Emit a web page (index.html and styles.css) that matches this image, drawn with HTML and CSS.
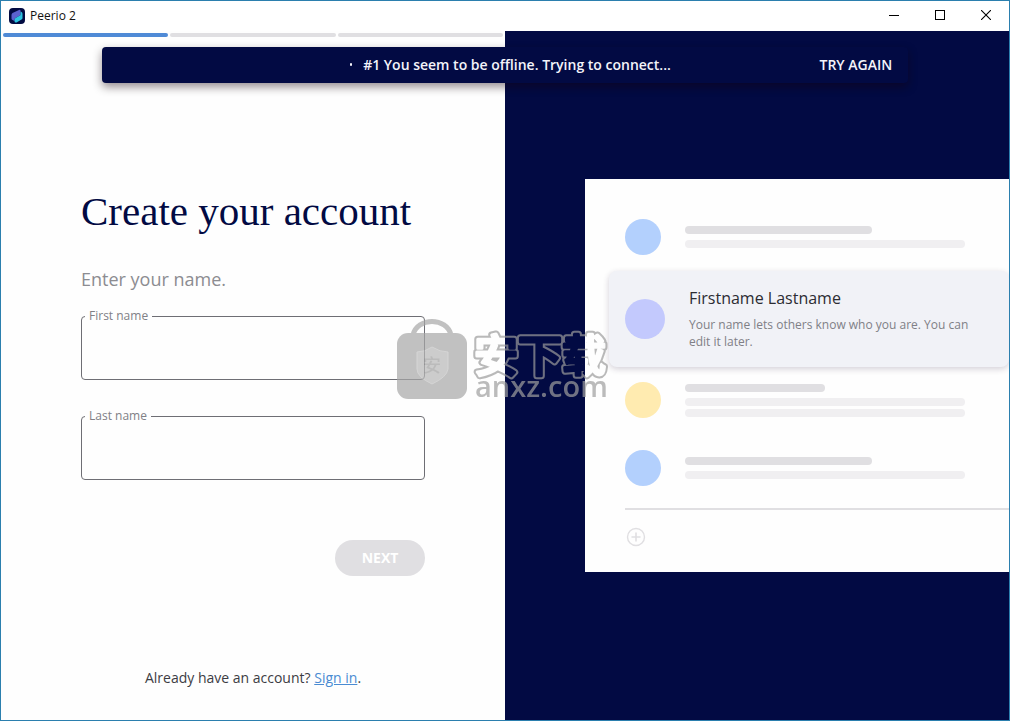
FILE: index.html
```html
<!DOCTYPE html>
<html lang="en">
<head>
<meta charset="utf-8">
<meta name="viewport" content="width=device-width, initial-scale=1">
<title>Peerio 2</title>
<link rel="stylesheet" href="styles.css">
</head>
<body>
<div class="window">
  <header class="titlebar">
    <svg class="app-icon" width="16" height="16" viewBox="0 0 16 16" aria-hidden="true">
      <rect width="16" height="16" rx="4" fill="#020b42"/>
      <path d="M2.500 7Q2.500 6 3.500 5L10 2Q11.500 1.300 11.500 3V6.500Q11.500 7.500 10 8L6.500 10Q5.500 10.500 5.500 11.500V13L3.500 12Q2.500 11.500 2.500 10.500Z" fill="#5b62cf"/>
      <path d="M11.500 3.500L12.500 4Q13.500 4.500 13.500 6V10Q13.500 11 12.500 11.500L7.500 14.500Q5.500 15 5.500 13V11.500Q5.500 10.500 6.500 10L10 8Q11.500 7.500 11.500 6.500Z" fill="#2cc3e0"/>
    </svg>
    <span class="app-name">Peerio 2</span>
    <div class="window-controls">
      <button class="window-button" type="button" aria-label="Minimize">
        <svg width="10" height="10" viewBox="0 0 10 10"><path d="M0 5.500H10" stroke="#000"/></svg>
      </button>
      <button class="window-button" type="button" aria-label="Maximize">
        <svg width="10" height="10" viewBox="0 0 10 10"><rect x=".5" y=".5" width="9" height="9" fill="none" stroke="#000"/></svg>
      </button>
      <button class="window-button" type="button" aria-label="Close">
        <svg width="10" height="10" viewBox="0 0 10 10"><path d="M0 0L10 10M10 0L0 10" stroke="#000" stroke-width="1.100"/></svg>
      </button>
    </div>
  </header>

  <main class="content">
    <section class="signup">
      <div class="progress">
        <span class="step step-active"></span>
        <span class="step"></span>
        <span class="step"></span>
      </div>
      <form class="form">
        <h1 class="title">Create your account</h1>
        <p class="subtitle">Enter your name.</p>
        <fieldset class="field">
          <legend class="field-legend"><label for="first-name">First name</label></legend>
          <input class="field-input" id="first-name" type="text">
        </fieldset>
        <fieldset class="field">
          <legend class="field-legend"><label for="last-name">Last name</label></legend>
          <input class="field-input" id="last-name" type="text">
        </fieldset>
        <button class="next" type="submit" disabled>NEXT</button>
      </form>
      <p class="signin">Already have an account? <a class="signin-link" href="#">Sign in</a>.</p>
    </section>

    <section class="preview">
      <div class="card">
        <div class="row">
          <span class="avatar avatar-blue"></span>
          <div class="lines"><span class="line line-head"></span><span class="line"></span></div>
        </div>
        <div class="highlight">
          <span class="avatar avatar-violet"></span>
          <div class="highlight-text">
            <h2 class="highlight-name">Firstname Lastname</h2>
            <p class="highlight-note">Your name lets others know who you are. You can edit it later.</p>
          </div>
        </div>
        <div class="row row-gap">
          <span class="avatar avatar-yellow"></span>
          <div class="lines"><span class="line line-head line-short"></span><span class="line"></span><span class="line line-tight"></span></div>
        </div>
        <div class="row">
          <span class="avatar avatar-blue"></span>
          <div class="lines"><span class="line line-head"></span><span class="line"></span></div>
        </div>
        <div class="card-footer">
          <svg width="22" height="22" viewBox="0 0 22 22" fill="none" stroke="#e0dfe2" aria-hidden="true">
            <circle cx="11" cy="11" r="8.500" stroke-width="1.400"/>
            <path d="M6.500 11H15.500M11 6.500V15.500" stroke-width="1.600"/>
          </svg>
        </div>
      </div>
    </section>
  </main>

  <div class="banner" role="status">
    <div class="banner-message">
      <span class="spinner"><i class="spinner-dot"></i></span>
      <span>#1 You seem to be offline. Trying to connect...</span>
    </div>
    <button class="retry" type="button">TRY AGAIN</button>
  </div>

  <svg class="watermark" width="230" height="96" viewBox="0 0 230 96" aria-hidden="true">
    <defs>
      <mask id="outline" maskUnits="userSpaceOnUse" x="0" y="0" width="230" height="96">
        <text class="mark-cjk mark-outer" x="80" y="57">安下载</text>
        <text class="mark-cjk mark-inner" x="80" y="57">安下载</text>
      </mask>
    </defs>
    <path d="M19 20C23 2 53 2 57 20" fill="none" stroke="#a8a8a8" stroke-width="5"/>
    <rect x="3" y="18" width="70" height="66" rx="11" fill="#a8a8a8"/>
    <path d="M38 32Q46 37 54 37V54Q53 62 38 69Q23 62 23 54V37Q31 37 38 32Z" fill="#b8b8b8" stroke="#c4c4c4"/>
    <text class="mark-small" x="38" y="57" text-anchor="middle">安</text>
    <rect x="70" y="0" width="160" height="96" fill="#9c9c9c" mask="url(#outline)"/>
    <text class="mark-latin" x="81" y="82">anxz.com</text>
  </svg>
</div>
</body>
</html>
```
FILE: styles.css
```css
* { box-sizing: border-box; }

body {
  margin: 0;
  font-family: "Open Sans", "Noto Sans", sans-serif;
  color: #3c3c43;
}

h1, h2, p { margin: 0; }
button { font-family: inherit; border: 0; padding: 0; background: none; }

.window {
  position: relative;
  display: flex;
  flex-direction: column;
  min-height: 100vh;
  overflow: hidden;
  border: 1px solid #2b7fae;
  background: #fefefe;
}

.titlebar {
  display: flex;
  align-items: center;
  height: 30px;
  padding-left: 8px;
  background: #fff;
}
.app-icon { margin-right: 5px; }
.app-name { padding-bottom: 2px; font: 12px "Open Sans", sans-serif; color: #111; }
.window-controls { display: flex; align-self: stretch; margin-left: auto; }
.window-button {
  display: grid;
  place-items: center;
  width: 46px;
  padding-bottom: 2px;
}

.content { flex: 1; display: grid; grid-template-columns: 1fr 1fr; }

.signup { display: flex; flex-direction: column; min-width: 0; }
.progress { display: flex; gap: 2px; padding: 2px; }
.step { flex: 1; height: 4px; border-radius: 2px; background: #e0dfe2; }
.step-active { background: #4f8ad6; }

.form { display: flex; flex-direction: column; padding: 148px 80px 0; }
.title {
  font: 41px/48px "Source Serif Pro", "Liberation Serif", serif;
  white-space: nowrap;
  color: #020a43;
}
.subtitle {
  margin: 32px 0 17px;
  font-size: 18px;
  line-height: 24px;
  color: #8c8c91;
}
.field {
  min-width: 0;
  height: 72px;
  margin: 0 0 28px;
  padding: 0 3px;
  border: 1px solid #6e6e74;
  border-radius: 4px;
}
.field-legend {
  padding: 0 4px;
  font-size: 12px;
  line-height: 16px;
  color: #808086;
}
.field-input {
  width: 100%;
  height: 48px;
  padding: 0 12px;
  border: 0;
  outline: 0;
  background: transparent;
  font: inherit;
}
.next {
  align-self: flex-end;
  width: 90px;
  height: 36px;
  margin-top: 32px;
  padding-bottom: 2px;
  border-radius: 18px;
  background: #e0dfe2;
  color: #fff;
  font-size: 14px;
  font-weight: 700;
}
.signin {
  margin-top: auto;
  padding-bottom: 32px;
  font-size: 14px;
  line-height: 20px;
  text-align: center;
}
.signin-link { color: #4a8bd2; }

.preview {
  display: flex;
  align-items: center;
  min-width: 0;
  padding-left: 80px;
  background: #020a43;
}
.card { flex: 1; min-width: 0; padding: 40px 0 0 40px; background: #fefefe; }
.row { display: flex; align-items: center; gap: 24px; height: 36px; }
.row-gap { margin: 15px 0 32px; }
.avatar { flex: none; width: 36px; height: 36px; border-radius: 50%; }
.avatar-blue { background: #b3d0fd; }
.avatar-yellow { background: #ffebb0; }
.avatar-violet { width: 40px; height: 40px; background: #c3c9fd; }
.lines { display: flex; flex-direction: column; gap: 6px; }
.line { width: 280px; height: 8px; border-radius: 4px; background: #f0eff1; }
.line-head { width: 187px; background: #e0dfe2; }
.line-short { width: 140px; }
.line-tight { margin-top: -3px; }

.highlight {
  display: flex;
  align-items: center;
  gap: 24px;
  margin: 16px 0 0 -16px;
  min-height: 96px;
  padding: 15px 32px 16px 16px;
  border-radius: 8px;
  background: #f1f2f7;
  box-shadow: 0 2px 6px rgba(40, 20, 60, .2);
}
.highlight-name { font-size: 16px; line-height: 22px; font-weight: 500; color: #2c2c33; }
.highlight-note {
  margin-top: 7px;
  font-size: 12px;
  line-height: 17px;
  color: #808086;
}
.card-footer {
  display: flex;
  margin-top: 22px;
  padding: 16px 0 24px;
  border-top: 2px solid #e0dfe2;
}

.banner {
  position: absolute;
  top: 46px;
  left: 10%;
  right: 10%;
  display: grid;
  grid-template-columns: 1fr auto 1fr;
  align-items: center;
  height: 36px;
  padding: 0 16px 2px;
  border-radius: 4px;
  background: #020a43;
  color: #f4f4fa;
  font-size: 14px;
  font-weight: 600;
  box-shadow: 0 4px 10px rgba(20, 0, 10, .45);
}
.banner-message { grid-column: 2; display: flex; align-items: center; white-space: nowrap; }
.spinner { display: grid; place-items: center; width: 24px; height: 16px; }
.spinner-dot { width: 2px; height: 3px; border-radius: 1px; background: #f4f4fa; }
.retry { justify-self: end; color: inherit; font-size: 14px; font-weight: 600; }

.watermark {
  position: absolute;
  top: 314px;
  left: 393px;
  opacity: .7;
  pointer-events: none;
}
.mark-cjk {
  font: 500 44px "Noto Sans CJK SC", sans-serif;
  stroke-linejoin: round;
}
.mark-outer { fill: #fff; stroke: #fff; stroke-width: 7px; }
.mark-inner { fill: #000; stroke: #000; stroke-width: 3px; }
.mark-small { font: 500 18px "Noto Sans CJK SC", sans-serif; fill: #a0a0a0; }
.mark-latin { font: 600 29px "Open Sans", sans-serif; fill: #9f9f9f; }
```
